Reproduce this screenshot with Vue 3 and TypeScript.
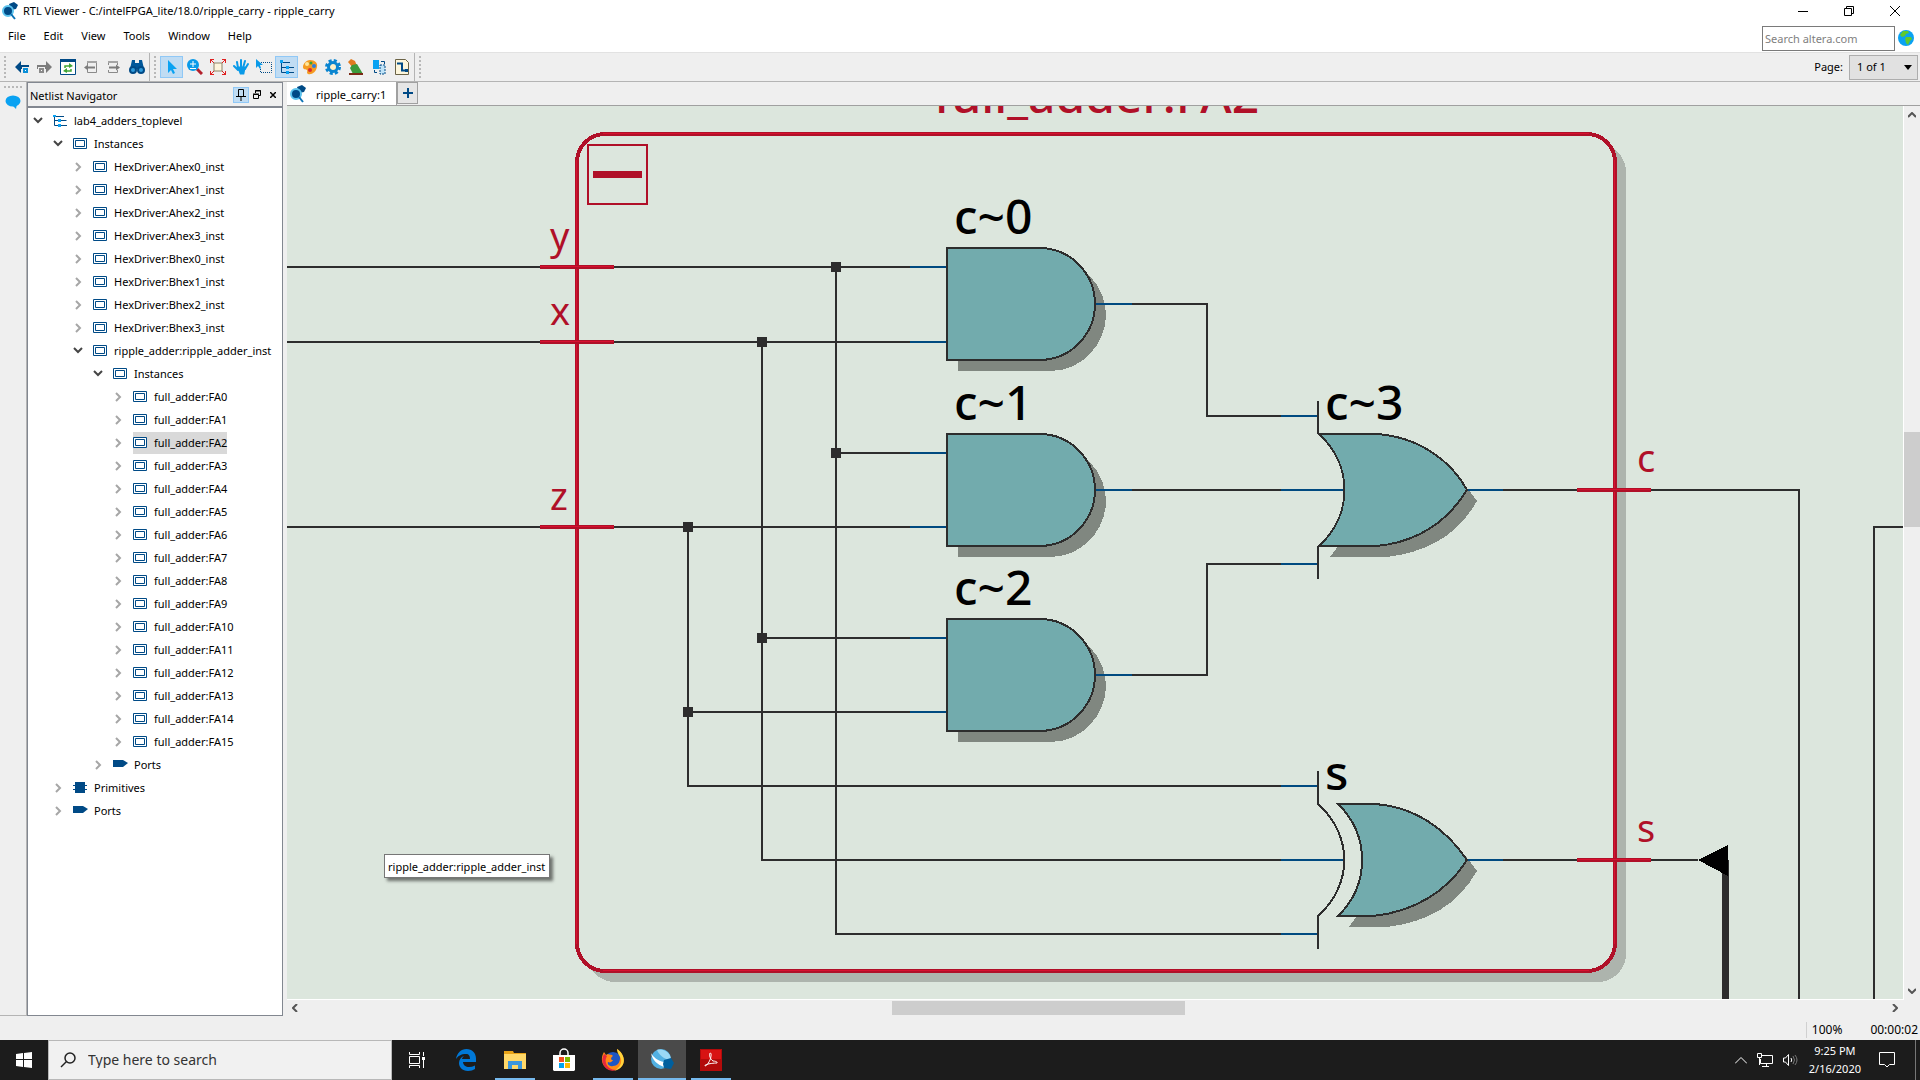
<script setup lang="ts">
import { ref } from 'vue'

type NodeIcon = 'design' | 'instance' | 'port' | 'primitive'

interface TreeRow {
  label: string
  level: number
  icon: NodeIcon
  open?: boolean
}

const hexNames = ['A', 'B'].flatMap((side) => [0, 1, 2, 3].map((n) => `HexDriver:${side}hex${n}_inst`))

const rows: TreeRow[] = [
  { label: 'lab4_adders_toplevel', level: 0, icon: 'design', open: true },
  { label: 'Instances', level: 1, icon: 'instance', open: true },
  ...hexNames.map((label): TreeRow => ({ label, level: 2, icon: 'instance' })),
  { label: 'ripple_adder:ripple_adder_inst', level: 2, icon: 'instance', open: true },
  { label: 'Instances', level: 3, icon: 'instance', open: true },
  ...Array.from({ length: 16 }, (_, n): TreeRow => ({ label: `full_adder:FA${n}`, level: 4, icon: 'instance' })),
  { label: 'Ports', level: 3, icon: 'port' },
  { label: 'Primitives', level: 1, icon: 'primitive' },
  { label: 'Ports', level: 1, icon: 'port' },
]

const selected = ref('full_adder:FA2')
const page = ref('1 of 1')
const menus = ['File', 'Edit', 'View', 'Tools', 'Window', 'Help']

const andGates = [
  { name: 'c~0', y: 142 },
  { name: 'c~1', y: 328 },
  { name: 'c~2', y: 513 },
]

const wires = [
  // input nets
  'M0 161H660M0 236H660M0 421H660',
  'M549 161V828H1031M475 236V754H1058M401 421V680H1031',
  'M549 347H660M475 532H660M401 606H660',
  // gate outputs
  'M808 198H920V310H1031M808 384H1058M808 569H920V458H1031',
  'M1180 384H1512V900M1180 754H1411',
  'M1700 421H1587V900',
]

const stubs =
  'M623 161H660M623 236H660M623 347H660M623 421H660M623 532H660M623 606H660' +
  'M808 198H845M808 384H845M808 569H845' +
  'M994 310H1031M994 384H1058M994 458H1031M994 680H1031M994 754H1058M994 828H1031' +
  'M1180 384H1216M1180 754H1216'

const junctions = [
  [549, 161],
  [475, 236],
  [549, 347],
  [401, 421],
  [475, 532],
  [401, 606],
]

const ports = [
  { name: 'y', x: 263, y: 144, from: 253, line: 161 },
  { name: 'x', x: 263, y: 219, from: 253, line: 236 },
  { name: 'z', x: 263, y: 404, from: 253, line: 421 },
  { name: 'c', x: 1350, y: 366, from: 1290, line: 384 },
  { name: 's', x: 1350, y: 736, from: 1290, line: 754 },
]
</script>

<template>
  <div class="desktop">
    <header class="titlebar">
      <svg class="logo" width="18" height="18" viewBox="0 0 18 18">
        <path d="M8 2l5-2 4 3-2 4-5 1z" fill="#004a86" />
        <circle cx="7" cy="9" r="5" fill="#004a86" stroke="#5cc3ee" stroke-width="2" />
        <path d="M10 12l4 5" stroke="#0b72b5" stroke-width="2" />
      </svg>
      <h1>RTL Viewer - C:/intelFPGA_lite/18.0/ripple_carry - ripple_carry</h1>
      <div class="winbtns">
        <button aria-label="Minimize"><svg width="10" height="10"><path d="M0 5.500H10" stroke="#000" /></svg></button>
        <button aria-label="Restore">
          <svg width="10" height="10" fill="none" stroke="#000"><path d="M.5 2.500h7v7h-7zM2.500 2.500v-2h7v7h-2" /></svg>
        </button>
        <button aria-label="Close"><svg width="10" height="10"><path d="M0 0L10 10M10 0L0 10" stroke="#000" /></svg></button>
      </div>
    </header>

    <div class="menubar">
      <nav>
        <button v-for="m in menus" :key="m">{{ m }}</button>
      </nav>
      <div class="websearch">
        <input type="text" placeholder="Search altera.com" aria-label="Search altera.com" />
        <button aria-label="Go">
          <svg width="16" height="16" viewBox="0 0 16 16">
            <circle cx="8" cy="8" r="8" fill="#0aa2f2" />
            <path d="M5 1l5 0 1 2-3 1-1 2-3 1-2-2zM8 7l5 0 1 2-2 2-2 4-2-2-1-4z" fill="#5fc92e" />
          </svg>
        </button>
      </div>
    </div>

    <div class="toolbar">
      <div class="grip"></div>
      <div class="tools">
        <button aria-label="Back">
          <svg width="16" height="16"><path d="M1 8l6-6v4h8v4H7v4z" fill="#004a86" /><path d="M8 8h7v7H8z" fill="#efefef" /><path d="M9 9h5v5H9z" fill="#0a8fd8" /><path d="M11 11h1v1h-1z" fill="#fff" /></svg>
        </button>
        <button aria-label="Forward">
          <svg width="16" height="16"><path d="M15 8L9 2v4H0v4h9v4z" fill="#7c7c7c" /><path d="M1 8h7v7H1z" fill="#efefef" /><path d="M2 9h5v5H2z" fill="#8a8a8a" /><path d="M4 11h1v1H4z" fill="#fff" /></svg>
        </button>
        <button aria-label="Refresh">
          <svg width="16" height="16"><path d="M.5.5h15v15H.5z" fill="#fff" stroke="#004a86" /><path d="M0 0h16v3H0z" fill="#004a86" /><path d="M5 9V7h6M11 10v2H5" fill="none" stroke="#3fa535" stroke-width="1.500" /><path d="M9 4l4 3-4 2zM7 14l-4-2 4-3z" fill="#3fa535" /></svg>
        </button>
        <button aria-label="Previous page">
          <svg width="16" height="16"><path d="M4.500 6V2.500h9v11h-9V11" fill="none" stroke="#8a8a8a" /><path d="M4 2h10v2H4z" fill="#a5a5a5" /><path d="M1 8.500l4-3v2h7v2H5v2z" fill="#7c7c7c" /></svg>
        </button>
        <button aria-label="Next page">
          <svg width="16" height="16"><path d="M2.500 6V2.500h9V6M11.500 11v2.500h-9V11" fill="none" stroke="#8a8a8a" /><path d="M2 2h10v2H2z" fill="#a5a5a5" /><path d="M14 8.500l-4-3v2H3v2h7v2z" fill="#7c7c7c" /></svg>
        </button>
        <button aria-label="Find">
          <svg width="16" height="16"><path d="M3 1h3v3h4V1h3l2 9H1z" fill="#00579a" /><circle cx="4" cy="11" r="3" fill="#2f9bdc" stroke="#004a86" stroke-width="2" /><circle cx="12" cy="11" r="3" fill="#2f9bdc" stroke="#004a86" stroke-width="2" /></svg>
        </button>
      </div>
      <div class="divider"></div>
      <div class="grip"></div>
      <div class="tools">
        <button class="on" aria-label="Selection tool">
          <svg width="16" height="16"><path d="M4 1v13l3-3 2 4 2-1-2-4h4z" fill="#0aa2f2" /></svg>
        </button>
        <button aria-label="Zoom tool">
          <svg width="16" height="16"><path d="M10 10l5 5" stroke="#b3202c" stroke-width="3" /><circle cx="6" cy="6" r="6" fill="#0a9ae8" /><path d="M3 5h6M6 2v6M3 9.500h6" stroke="#fff" /></svg>
        </button>
        <button aria-label="Fit in window">
          <svg width="16" height="16"><path d="M4 4h8v8H4z" fill="#fdf5dd" stroke="#8d8468" /><path d="M.5 4V.5H4M12 .5h3.500V4M15.500 12v3.500H12M4 15.500H.5V12M0 0l4 4M16 0l-4 4M16 16l-4-4M0 16l4-4" fill="none" stroke="#e02020" /></svg>
        </button>
        <button aria-label="Hand tool">
          <svg width="16" height="16" fill="none" stroke="#0a9ae8" stroke-linecap="round" stroke-width="2"><path d="M5 9L4 3M8 8V1M10 9l2-7M12 10l3-5M5 11L1 7" /><path d="M6 9h5l-1 5H8z" stroke-width="3" fill="#0a9ae8" /></svg>
        </button>
        <button aria-label="Area selection">
          <svg width="16" height="16"><path d="M5 3.500h10.500v10H4.500v-4" fill="none" stroke="#004a86" stroke-dasharray="1 1" /><path d="M0 0v9l2-2 2 3 1-1-1-3h3z" fill="#0a9ae8" /></svg>
        </button>
        <button class="on" aria-label="Netlist Navigator">
          <svg width="16" height="16"><path d="M2.500 2v11.500H7M2.500 3.500H11M3 8.500h12M9 13.500h6" fill="none" stroke="#004a86" /><path d="M1 1h3v3H1zM7 7h3v3H7zM7 12h3v3H7z" fill="#0aa2f2" /></svg>
        </button>
        <button aria-label="Colors">
          <svg width="16" height="16"><path d="M8 1c5 0 8 3 7 7-1 5-5 8-9 7-2-1 0-3-1-4S1 11 1 8s3-7 7-7z" fill="#f59b22" /><circle cx="5" cy="5" r="2" fill="#ffe79a" /><circle cx="9" cy="4" r="1.500" fill="#37a33a" /><circle cx="12" cy="7" r="2" fill="#2b7de0" /><circle cx="8" cy="11" r="2" fill="#d92b2b" /></svg>
        </button>
        <button aria-label="Settings">
          <svg width="16" height="16" fill="none"><circle cx="8" cy="8" r="6.500" stroke="#0a85d0" stroke-width="3" stroke-dasharray="3 2.100" /><circle cx="8" cy="8" r="4.500" fill="#fdf0c8" stroke="#0a85d0" stroke-width="3" /></svg>
        </button>
        <button aria-label="Bird's eye view">
          <svg width="16" height="16"><path d="M0 3l3-3 4 2 2 5-4 2z" fill="#e07a1f" /><path d="M4 6l5-1 6 10H5L2 9z" fill="#3b9a3b" /><path d="M1 15h14" stroke="#7a2a16" stroke-width="2" /></svg>
        </button>
        <button aria-label="Export">
          <svg width="16" height="16"><path d="M2 1h6v9H2z" fill="#0aa2f2" /><path d="M9 6h5v9H9z" fill="#bfe3f8" stroke="#004a86" stroke-dasharray="2 1" /><path d="M10 2.500h3.500V5M6 13.500H3.500V11" stroke="#004a86" fill="none" /></svg>
        </button>
        <button aria-label="Schematic page">
          <svg width="16" height="16"><path d="M1.500.5h10l3 3v12h-13z" fill="#fdf6dc" stroke="#6b6346" /><path d="M3 4.500h5v7h4" fill="none" stroke="#004a86" stroke-width="2" /><path d="M11 10h3v3h-3z" fill="#004a86" /></svg>
        </button>
      </div>
      <div class="divider"></div>
      <div class="grip"></div>
      <label class="pagepick">
        Page:
        <span class="selectwrap">
          <select v-model="page"><option>1 of 1</option></select>
          <svg width="8" height="5"><path d="M0 0h8L4 5z" fill="#000" /></svg>
        </span>
      </label>
    </div>

    <main class="work">
      <div class="dockstrip">
        <div class="dots"></div>
        <svg width="16" height="14" viewBox="0 0 16 14"><ellipse cx="8" cy="6" rx="7.500" ry="5.500" fill="#0aa2f2" /><path d="M7 10l5-1-1 5z" fill="#0aa2f2" /></svg>
      </div>

      <aside class="navigator">
        <div class="navhead">
          <h2>Netlist Navigator</h2>
          <button class="pin" aria-label="Pin"><svg width="10" height="12"><path d="M2.500 7.500v-7h5v7M0 7.500h10M5 8v4" fill="none" stroke="#000" /></svg></button>
          <button aria-label="Float"><svg width="8" height="9"><path d="M.5 4.500h5v4h-5zM2.500 3V.5h5v5H6M0 4h6M2 1h6" fill="none" stroke="#000" /></svg></button>
          <button aria-label="Close panel"><svg width="6" height="6"><path d="M0 0l6 6M6 0L0 6" stroke="#000" stroke-width="1.500" /></svg></button>
        </div>
        <ul class="tree" role="tree">
          <li
            v-for="(row, i) in rows"
            :key="i"
            role="treeitem"
            :aria-expanded="!!row.open"
            :class="['level' + row.level, { selected: row.label === selected }]"
          >
            <svg class="arrow" width="10" height="10" fill="none" stroke-width="2">
              <path v-if="row.open" d="M1 2l4 4 4-4" stroke="#454545" />
              <path v-else d="M3 1l4 4-4 4" stroke="#a6a6a6" />
            </svg>
            <button class="node" @click="selected = row.label">
              <svg width="16" height="12" viewBox="0 0 16 12">
                <g v-if="row.icon === 'instance'" fill="#fff" stroke="#004a86"><path d="M.5.5h13v10H.5zM2.500 2.500h9v6h-9z" /></g>
                <path v-else-if="row.icon === 'port'" d="M0 1h10l5 3-5 4H0z" fill="#004a86" />
                <g v-else-if="row.icon === 'primitive'"><path d="M2 0h10v11H2z" fill="#004a86" /><path d="M0 3.500h14M0 7.500h14" stroke="#004a86" /></g>
                <g v-else><path d="M1.500 0v10.500H6M1.500 1.500H11M1 5.500h12.500M8 10.500h6" fill="none" stroke="#004a86" /><path d="M0 0h3v2H0zM5 4h3v3H5zM5 9h3v3H5z" fill="#0aa2f2" /></g>
              </svg>
              <span>{{ row.label }}</span>
            </button>
          </li>
        </ul>
      </aside>

      <section class="viewer">
        <div class="tabs">
          <button class="tab">
            <svg width="18" height="18" viewBox="0 0 18 18">
              <path d="M8 2l5-2 4 3-2 4-5 1z" fill="#004a86" />
              <circle cx="7" cy="9" r="5" fill="#004a86" stroke="#5cc3ee" stroke-width="2" />
              <path d="M10 12l4 5" stroke="#0b72b5" stroke-width="2" />
            </svg>
            <span>ripple_carry:1</span>
          </button>
          <button class="newtab" aria-label="New tab"><svg width="10" height="10"><path d="M0 5h10M5 0v10" stroke="#004a86" stroke-width="2" /></svg></button>
        </div>
        <div class="canvasrow">
          <div class="canvas">
            <svg class="schematic" fill="none">
              <rect x="300" y="38" width="1039" height="838" rx="28" fill="#adb4ad" />
              <rect x="290" y="28" width="1038" height="837" rx="28" fill="#dce6dd" stroke="#b01028" stroke-width="4" />
              <path d="M289 54V838M316 27H1302M1327 54V838M316 864H1302" stroke="#d8102f" />
              <text class="big red" x="647" y="7">full_adder:FA2</text>
              <rect x="301" y="39" width="59" height="59" stroke="#b01028" stroke-width="2" />
              <rect x="306" y="65" width="49" height="7" fill="#b01028" />

              <g fill="#808780">
                <path v-for="g in andGates" :key="g.name" :transform="`translate(671 ${g.y + 11})`" d="M0 0H92C125 0 148 28 148 56S125 112 92 112H0z" />
                <path d="M1043 451C1068 425 1068 365 1043 339H1100C1140 345 1170 365 1190 395C1170 430 1140 446 1100 451z" />
                <path d="M1062 821C1086 795 1086 735 1062 709H1100C1140 715 1170 735 1190 765C1170 800 1140 816 1100 821z" />
              </g>

              <g stroke="#2d2d2d" stroke-width="2">
                <path v-for="w in wires" :key="w" :d="w" />
              </g>
              <path :d="stubs" stroke="#004a80" stroke-width="2" />

              <g fill="#72abad" stroke="#2d2d2d" stroke-width="2">
                <path v-for="g in andGates" :key="g.name" :transform="`translate(660 ${g.y})`" d="M0 0H92C126 0 148 28 148 56S126 112 92 112H0z" />
                <path d="M1032 328H1088C1130 330 1164 354 1180 384C1160 416 1130 436 1090 440H1032C1066 409 1066 359 1032 328z" />
                <path d="M1051 698H1086C1128 700 1160 724 1180 754C1160 786 1126 806 1086 810H1051C1083 779 1083 729 1051 698z" />
              </g>
              <g stroke="#2d2d2d" stroke-width="2">
                <path d="M1031 295V328M1031 440V473" />
                <path d="M1031 665V698C1066 729 1066 779 1031 810V843" />
              </g>
              <rect v-for="j in junctions" :key="j.join()" :x="j[0] - 5" :y="j[1] - 5" width="10" height="10" fill="#2d2d2d" />

              <text v-for="g in andGates" :key="g.name" class="big" x="667" :y="g.y - 14">{{ g.name }}</text>
              <text class="big" x="1038" y="314">c~3</text>
              <text class="big" x="1038" y="684">s</text>

              <g v-for="p in ports" :key="p.name">
                <path :d="`M${p.from} ${p.line}h74`" stroke="#b01028" stroke-width="4" />
                <path :d="`M${p.from} ${p.line - 1}h74`" stroke="#d8102f" />
                <text class="port" :x="p.x" :y="p.y">{{ p.name }}</text>
              </g>
              <path d="M1438 754V900" stroke="#2d2d2d" stroke-width="7" />
              <path d="M1411 754l30-15v31z" fill="#000" />
            </svg>
            <div class="tooltip" role="tooltip">ripple_adder:ripple_adder_inst</div>
          </div>
          <div class="vscroll">
            <svg width="8" height="6"><path d="M0 5l4-4 4 4" /></svg>
            <div class="vtrack"><div class="thumb"></div></div>
            <svg width="8" height="6"><path d="M0 1l4 4 4-4" /></svg>
          </div>
        </div>
        <div class="hscroll">
          <svg width="6" height="8"><path d="M5 0L1 4l4 4" /></svg>
          <div class="htrack"><div class="thumb"></div></div>
          <svg width="6" height="8"><path d="M1 0l4 4-4 4" /></svg>
        </div>
      </section>
    </main>

    <footer class="status"><span class="zoom">100%</span><span>00:00:02</span></footer>

    <div class="taskbar">
      <button class="start" aria-label="Start">
        <svg width="16" height="16"><path d="M0 2l7-1v6H0zM8 1l8-1v7H8zM0 8h7v7l-7-1zM8 8h8v8l-8-1z" fill="#fff" /></svg>
      </button>
      <label class="tasksearch">
        <svg width="16" height="16" fill="none" stroke="#222" stroke-width="1.500"><circle cx="10" cy="6" r="5" /><path d="M6.500 9.500L1 15" /></svg>
        <input type="text" placeholder="Type here to search" aria-label="Type here to search" />
      </label>
      <div class="apps">
        <button aria-label="Task View">
          <svg width="16" height="16" fill="none" stroke="#fff"><path d="M.5 0v2.500h10V0M.5 4.500h10v7H.5zM.5 16v-2.500h10V16M14.500 0v4M14.500 8v8" /><path d="M13 5h3v3h-3z" fill="#fff" stroke="none" /></svg>
        </button>
        <button aria-label="Edge">
          <svg width="22" height="22" viewBox="0 0 22 22"><path d="M1 10C2 4 6 0 11.500 0 17 0 21 4 21 9.500V13H8c0 3 3 5 6 5 2 0 4-.5 6-1.500V20c-2 1-4 2-7 2-6 0-9-4-9-8 0-3 2-6 5-7-1 1-2 2-2 3h8c0-3-1-5-4-5C6 5 3 7 1 10z" fill="#0078d7" /></svg>
        </button>
        <button class="running" aria-label="File Explorer">
          <svg width="22" height="18" viewBox="0 0 22 18"><path d="M0 0h9l1 2h12v16H0z" fill="#e8a317" /><path d="M0 3h22v15H0z" fill="#ffd868" /><path d="M4 10h14v8h-4v-4H8v4H4z" fill="#3c97dd" /></svg>
        </button>
        <button aria-label="Store">
          <svg width="24" height="24" viewBox="0 0 24 24"><path d="M8 7V5a4 4 0 0 1 8 0v2" fill="none" stroke="#fff" stroke-width="1.500" /><path d="M1 7h22v15l-1 1H2l-1-1z" fill="#fff" /><path d="M7 9h5v5H7z" fill="#f25022" /><path d="M13 9h5v5h-5z" fill="#7fba00" /><path d="M7 15h5v5H7z" fill="#00a4ef" /><path d="M13 15h5v5h-5z" fill="#ffb900" /></svg>
        </button>
        <button class="running" aria-label="Firefox">
          <svg width="24" height="24" viewBox="0 0 24 24"><circle cx="12" cy="13" r="9" fill="#1d56c4" /><path d="M3 4c-3 5-3 11 1 15 5 5 13 4 17-1 4-6 1-13-5-17 1 3 3 5 3 9 0 5-3 8-7 8-4 1-6-2-5-4 2 1 4 0 5-2-3 0-2-3 0-4-1-2-4-1-5-2L5 7z" fill="#ff8a16" /><path d="M16 1c6 4 9 11 5 17-2 3-5 4-8 5 5-3 8-7 7-12-1-4-4-5-4-10z" fill="#ffd43c" /><path d="M3 6c-3 6-2 11 3 15 3 2 6 2 9 1-5 0-9-3-10-7-1-3 0-5 1-7z" fill="#e8283c" /></svg>
        </button>
        <button class="running active" aria-label="Quartus">
          <svg width="24" height="24" viewBox="0 0 24 24"><circle cx="11" cy="11" r="10" fill="#52b0e2" /><path d="M7 2c8-2 14 4 14 10-4 0-11-3-14-10z" fill="#9ad8f5" /><path d="M1 5c2 4 7 8 13 9v5C8 17 2 12 1 5z" fill="#fff" /><path d="M14 12l7-2 3 5-3 6-7-1-1-4z" fill="#005f9e" /></svg>
        </button>
        <button class="running" aria-label="Acrobat Reader">
          <svg width="22" height="22" viewBox="0 0 22 22"><path d="M0 0h22v22H0z" fill="#b30b0b" /><path d="M1 1h20v9H1z" fill="#d81313" /><path d="M5 17c-1-2 9-3 12-3 1-1-2-2-4-2-3-2-4-6-3-8 2 0 1 4 0 7-1 2-3 6-5 6z" fill="none" stroke="#fff" /></svg>
        </button>
      </div>
      <div class="tray">
        <svg width="12" height="7"><path d="M0 6.500l6-6 6 6" fill="none" stroke="#fff" /></svg>
        <svg width="16" height="14" fill="none" stroke="#fff"><path d="M5 2.500h10.500v8H3.500V6M9.500 10.500v3M5 13.500h7M.5.500h4v4h-4zM2.500 4v8" /></svg>
        <svg width="16" height="12" fill="none" stroke="#fff"><path d="M.5 4v4h2l3 3.500V.5l-3 3.500zM8 4q1.500 2 0 4" /><path d="M10 2q3 4 0 8M12 1q4 5 0 10" stroke="#777" /></svg>
        <div class="clock"><span>9:25 PM</span><span>2/16/2020</span></div>
        <button aria-label="Notifications"><svg width="16" height="16" fill="none" stroke="#fff"><path d="M.5.5h15v12h-5l-2.500 2.500-2.500-2.500h-5z" /></svg></button>
        <div class="showdesk"></div>
      </div>
    </div>
  </div>
</template>

<style>
body {
  margin: 0;
}
</style>

<style scoped>
.desktop {
  display: flex;
  flex-direction: column;
  height: 100vh;
  overflow: hidden;
  background: #efefef;
  color: #000;
  font-family: "Noto Sans", "Open Sans", sans-serif;
  font-size: 11px;
  line-height: 16px;
}
* {
  box-sizing: border-box;
}
button,
input,
select {
  font: inherit;
  color: inherit;
  border: 0;
  padding: 0;
  background: none;
}
svg {
  display: block;
  flex: none;
}
h1,
h2 {
  margin: 0;
  font-size: 11px;
  font-weight: 400;
}
.titlebar {
  display: flex;
  align-items: center;
  height: 24px;
  padding: 0 2px 2px 1px;
  background: #fff;
}
.titlebar h1 {
  flex: 1;
  padding-left: 4px;
}
.winbtns {
  display: flex;
}
.winbtns button {
  width: 46px;
  height: 20px;
  display: grid;
  place-items: center;
}
.menubar {
  display: flex;
  justify-content: space-between;
  align-items: center;
  height: 28px;
  background: #fff;
}
.menubar nav {
  display: flex;
  gap: 18px;
  padding: 0 0 4px 8px;
}
.websearch {
  display: flex;
  align-items: center;
  gap: 3px;
  padding-right: 6px;
}
.websearch input {
  width: 133px;
  height: 25px;
  padding: 2px;
  border: 1px solid #7a7a7a;
  font-size: 11px;
}
input::placeholder {
  color: #808080;
  opacity: 1;
}
.toolbar {
  display: flex;
  align-items: center;
  height: 30px;
  border-top: 1px solid #e2e2e2;
  border-bottom: 1px solid #b4b4b4;
}
.grip {
  width: 2px;
  height: 22px;
  margin: 0 4px;
  background: repeating-linear-gradient(#b8b8b8 0 2px, transparent 2px 4px);
}
.tools {
  display: flex;
}
.tools button {
  width: 23px;
  height: 22px;
  display: grid;
  place-items: center;
}
.tools .on {
  background: #c0dcf3;
  border: 1px solid #90c8f6;
}
.divider {
  width: 1px;
  height: 28px;
  background: #b4b4b4;
  margin-left: 1px;
}
.pagepick {
  display: flex;
  align-items: center;
  gap: 6px;
  margin-left: auto;
  padding-right: 2px;
}
.selectwrap {
  position: relative;
}
.selectwrap select {
  display: block;
  appearance: none;
  width: 69px;
  height: 25px;
  padding-left: 7px;
  border: 1px solid #adadad;
  background: #e1e1e1;
}
.selectwrap svg {
  position: absolute;
  right: 6px;
  top: 10px;
  pointer-events: none;
}
.work {
  display: flex;
  flex: 1;
  min-height: 0;
}
.dockstrip {
  display: flex;
  flex-direction: column;
  align-items: center;
  gap: 7px;
  width: 27px;
  padding-top: 4px;
  border-right: 1px solid #b4b4b4;
  border-bottom: 1px solid #b4b4b4;
}
.dots {
  width: 18px;
  height: 2px;
  background: repeating-linear-gradient(90deg, #b8b8b8 0 2px, transparent 2px 4px);
}
.navigator {
  display: flex;
  flex-direction: column;
  width: 256px;
  border: 1px solid #828790;
  background: #fff;
}
.navhead {
  display: flex;
  align-items: center;
  height: 25px;
  padding: 0 1px 0 2px;
  background: #efefef;
  border-bottom: 2px solid #828790;
}
.navhead h2 {
  flex: 1;
  padding-top: 2px;
}
.navhead button {
  width: 16px;
  height: 16px;
  display: grid;
  place-items: center;
}
.navhead .pin {
  background: #c0dcf3;
  border: 1px solid #90c8f6;
}
.tree {
  list-style: none;
  margin: 0;
  padding: 1px 0 0 5px;
}
.tree li {
  display: flex;
  align-items: center;
  height: 23px;
  gap: 10px;
}
.tree .node {
  display: flex;
  align-items: center;
  gap: 5px;
  height: 22px;
  white-space: nowrap;
}
.tree .selected .node {
  background: #d9d9d9;
}
.tree .level1 {
  padding-left: 20px;
}
.tree .level2 {
  padding-left: 40px;
}
.tree .level3 {
  padding-left: 60px;
}
.tree .level4 {
  padding-left: 80px;
}
.viewer {
  display: flex;
  flex-direction: column;
  flex: 1;
  min-width: 0;
  margin-left: 4px;
}
.tabs {
  display: flex;
  height: 24px;
  border-bottom: 1px solid #a0a0a0;
}
.tab {
  display: flex;
  align-items: center;
  gap: 9px;
  width: 110px;
  padding-left: 2px;
  background: #fff;
  border-right: 1px solid #a0a0a0;
  white-space: nowrap;
}
.tab span {
  padding-top: 2px;
}
.newtab {
  display: grid;
  place-items: center;
  width: 21px;
  height: 22px;
  border: 1px solid #a0a0a0;
  background: #e6e6e6;
}
.canvasrow {
  display: flex;
  flex: 1;
  min-height: 0;
}
.canvas {
  position: relative;
  flex: 1;
  min-width: 0;
  overflow: hidden;
  background: #dce6dd;
  border-right: 1px solid #fff;
  border-bottom: 1px solid #fff;
}
.schematic {
  width: 100%;
  height: 100%;
  shape-rendering: crispEdges;
}
.big {
  font-size: 48px;
  font-weight: 500;
  fill: #000;
}
.red,
.port {
  fill: #b01028;
}
.port {
  font-size: 38px;
}
.tooltip {
  position: absolute;
  left: 97px;
  top: 748px;
  padding: 4px 4px 2px 3px;
  border: 1px solid #767676;
  background: #fff;
  box-shadow: 3px 3px 3px rgba(0, 0, 0, 0.5);
  white-space: nowrap;
}
.vscroll {
  display: flex;
  flex-direction: column;
  align-items: center;
  width: 16px;
  padding: 6px 0;
}
.vscroll > svg,
.hscroll > svg {
  fill: none;
  stroke: #555;
  stroke-width: 2;
}
.vtrack {
  flex: 1;
  width: 100%;
  padding-top: 314px;
}
.vtrack .thumb {
  height: 95px;
}
.thumb {
  background: #cdcdcd;
}
.hscroll {
  display: flex;
  align-items: center;
  height: 16px;
  padding: 0 22px 0 5px;
}
.htrack {
  flex: 1;
  padding-left: 37%;
}
.htrack .thumb {
  width: 293px;
  height: 14px;
}
.status {
  display: flex;
  justify-content: flex-end;
  align-items: center;
  gap: 28px;
  height: 24px;
  padding: 4px 2px 0 0;
  font-size: 12px;
}
.zoom {
  padding-left: 5px;
  border-left: 1px solid #d0d0d0;
}
.taskbar {
  display: flex;
  height: 40px;
  background: #1c1c1c;
  color: #fff;
}
.start {
  width: 48px;
  display: grid;
  place-items: center;
}
.tasksearch {
  display: flex;
  align-items: center;
  gap: 12px;
  width: 344px;
  padding-left: 11px;
  background: #f1f1f1;
  border: 1px solid #b8b8b8;
}
.tasksearch input {
  flex: 1;
  font-size: 14px;
  color: #222;
}
.tasksearch input::placeholder {
  color: #333;
}
.apps {
  display: flex;
  gap: 1px;
  padding-left: 1px;
}
.apps button {
  width: 48px;
  display: grid;
  place-items: center;
}
.apps .running {
  background: linear-gradient(#76b9ed, #76b9ed) bottom / 40px 2px no-repeat;
}
.apps .active {
  background: linear-gradient(#76b9ed, #76b9ed) bottom / 48px 2px no-repeat #4a4a4a;
}
.tray {
  display: flex;
  align-items: center;
  gap: 10px;
  margin-left: auto;
}
.tray > button {
  margin: 0 10px 0 8px;
}
.clock {
  display: flex;
  flex-direction: column;
  align-items: center;
  line-height: 18px;
}
.showdesk {
  width: 5px;
  height: 100%;
  border-left: 1px solid #777;
}
</style>
